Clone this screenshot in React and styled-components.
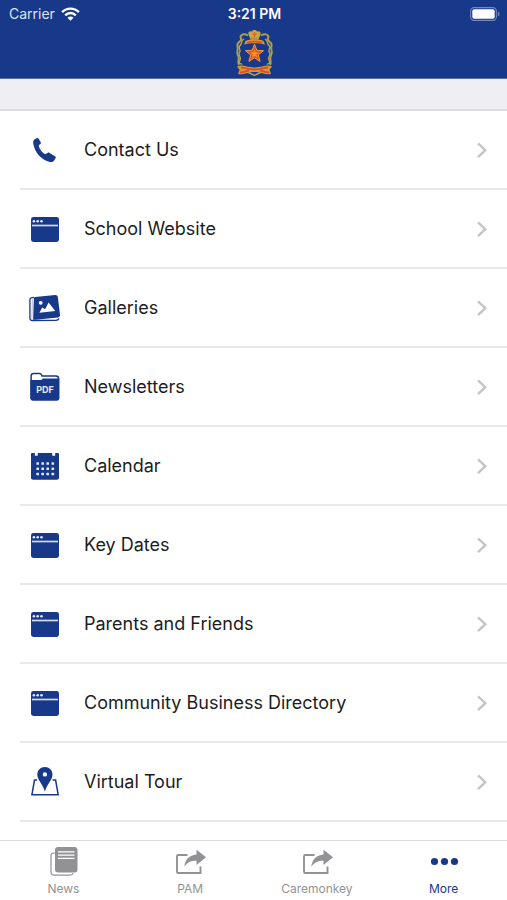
import React from "react";
import styled, { createGlobalStyle } from "styled-components";

const BLUE = "#18388a";
const GREY = "#929295";

const GlobalStyle = createGlobalStyle`
  * { box-sizing: border-box; }
  body {
    margin: 0;
    background: #fff;
    color: #1c1c1e;
    font-family: Inter, "Liberation Sans", sans-serif;
  }
`;

const Screen = styled.div`
  min-height: 100vh;
  display: flex;
  flex-direction: column;
`;

const Header = styled.header`
  height: 79px;
  display: flex;
  flex-direction: column;
  align-items: center;
  background: ${BLUE};
  border-bottom: 1px solid #5a70ad;
  color: #fff;
`;

const StatusBar = styled.div`
  width: 100%;
  height: 28px;
  padding: 0 7px 0 9px;
  display: grid;
  grid-template-columns: 1fr auto 1fr;
  align-items: center;
  font-size: 14px;
  line-height: 20px;
`;

const Carrier = styled.span`
  display: flex;
  align-items: center;
  gap: 6px;
  color: #dfe5f3;
`;

const Clock = styled.time`
  font-weight: 600;
`;

const Battery = styled.span`
  display: flex;
  justify-content: flex-end;
`;

const SectionGap = styled.div`
  height: 32px;
  background: #efeef3;
  border-bottom: 2px solid #dddde0;
`;

const Menu = styled.ul`
  flex: 1;
  margin: 0;
  padding: 0 0 18px 20px;
  list-style: none;
`;

const MenuLink = styled.a`
  height: 79px;
  padding: 0 18px 0 9px;
  display: flex;
  align-items: center;
  border-bottom: 2px solid #e9e9eb;
  color: inherit;
  font-size: 18px;
  line-height: 24px;
  text-decoration: none;
`;

const MenuIcon = styled.span`
  width: 32px;
  height: 32px;
  margin-right: 23px;
  color: ${BLUE};
`;

const MenuLabel = styled.span`
  flex: 1;
`;

const Tabs = styled.nav`
  position: sticky;
  bottom: 0;
  height: 60px;
  display: grid;
  grid-template-columns: repeat(4, 1fr);
  background: #fff;
  border-top: 1px solid #dcdcde;
`;

const Tab = styled.button`
  padding: 4px 0 0;
  display: flex;
  flex-direction: column;
  align-items: center;
  gap: 4px;
  border: 0;
  background: none;
  color: ${({ $active }) => ($active ? BLUE : GREY)};
  font-family: inherit;
  font-size: 12px;
  line-height: 16px;
  cursor: pointer;
`;

const Svg = styled.svg`
  display: block;
  flex: none;
`;

const Wifi = () => (
  <Svg width="19" height="14" viewBox="0 0 19 14" fill="none" stroke="#fff" strokeWidth="2.4" aria-hidden="true">
    <path d="M1.1 5.1c4.7-4.7 12.1-4.7 16.8 0M4.2 8.3c3-3 7.6-3 10.6 0" />
    <path d="M9.5 13.7 6.5 10.7c1.7-1.6 4.3-1.6 6 0Z" fill="#fff" stroke="none" />
  </Svg>
);

const BatteryIcon = () => (
  <Svg width="30" height="14" viewBox="0 0 30 14" aria-label="Battery full" role="img">
    <rect x=".6" y=".6" width="25.8" height="12.8" rx="3.6" fill="none" stroke="#7688be" strokeWidth="1.1" />
    <rect x="2.3" y="2.3" width="22.4" height="9.4" rx="2" fill="#fff" />
    <path d="M28 4.6c2 .8 2 4 0 4.8Z" fill="#7688be" />
  </Svg>
);

const Crest = () => (
  <Svg width="40" height="48" viewBox="0 0 40 48" fill="none" aria-label="School crest" role="img">
    <path d="M16.5 11.500 14.500 6.500c-.8-2.600 1.700-3.900 3.500-2.700.3-2.900 4.700-2.900 5 0 1.800-1.200 4.300.1 3.500 2.700l-2 5Z" fill="#c9a93a" />
    <path d="M20.500 4v5M18.500 6.300h4" stroke="#e65a2e" strokeWidth="1.300" />
    <path d="M16.500 10.300h8" stroke="#8f8a55" strokeWidth="1" />
    <path d="M11.500 13c4-2.200 14-2.200 18 0l1.500 3.600c-5-1.700-16-1.700-21 0Z" fill="#dd9a34" />
    <path d="M12.500 14.700c4-1.500 12-1.500 16 0" stroke="#e2502c" strokeWidth="1.700" />
    <path d="M14 7.500C9 4.500 5.500 7.500 7 10.500S2 14 3.500 18s-2 5.500.500 9.500-1.500 6 1 9.500" stroke="#aaa04a" strokeWidth="2" />
    <path d="M27 7.500c5-3 8.500 0 7 3s5 3.500 3.500 7.500 2 5.500-.5 9.500 1.500 6-1 9.500" stroke="#aaa04a" strokeWidth="2" />
    <path d="M10 11c-4 2-1 4-4 6.500s2 4-.5 7 3 4 .5 8 2 3 2 4" stroke="#bfa93f" strokeWidth="1.300" />
    <path d="M31 11c4 2 1 4 4 6.500s-2 4 .5 7-3 4-.5 8-2 3-2 4" stroke="#bfa93f" strokeWidth="1.300" />
    <path d="m20.500 16.200 2.300 6.100 6.700.4-5.200 4.200 1.800 6.500-5.600-3.600-5.600 3.600 1.800-6.500-5.200-4.200 6.700-.4Z" fill="#ee4a22" stroke="#eba33a" />
    <path d="m20.500 21 1 3.300 3.500-.1-2.700 2.200 1.100 3.400-2.900-2-2.900 2 1.100-3.400-2.700-2.200 3.500.1Z" fill="#f7912b" />
    <path d="M3 38.500c5-2.500 9 1 17.500 1s12.500-3.500 17.500-1l-2.500 3.200 1.500 4.300c-5.500 1.500-9-2-16.500-2S9.500 47.500 4 46l1.500-4.300Z" fill="#cf9a35" />
    <path d="M7 39.700c5-.2 6 1.800 13.500 1.800S29 39.500 34 39.700M6 44.500c4 .3 6-1.800 9-2m11 0c3 .2 5 2.300 9 2" stroke="#df4c2b" strokeWidth="1.800" />
    <path d="m14.500 44.500 6 2.800 6-2.800" stroke="#c7a33c" strokeWidth="1.400" />
  </Svg>
);

const PhoneIcon = () => (
  <Svg width="32" height="32" viewBox="0 0 32 32" fill="currentColor" aria-hidden="true">
    <path d="M5.300 5.600 7.700 4.200c.8-.5 1.500-.3 2 .5l2 3.500c.4.800.3 1.400-.4 1.900l-1.200 1c-.4.500-.4 1-.2 1.600 1.100 2.900 3 5.400 5.500 7.100.6.400 1.200.400 1.800 0l1.300-.9c.8-.5 1.400-.5 2.100 0l5.400 3.400c.8.500 1 1.200.5 2l-1.200 1.900c-.9 1.400-2.600 2.200-4.400 1.800C12.400 26 5.200 18.300 4.200 9.100c-.1-1.500.2-2.700 1.100-3.500Z" />
  </Svg>
);

const WindowIcon = () => (
  <Svg width="32" height="32" viewBox="0 0 32 32" aria-hidden="true">
    <rect x="2" y="4" width="28" height="25" rx="2.4" fill="currentColor" />
    <path d="M3 12.5h26" stroke="#d4dcef" strokeWidth="1.7" />
    <g fill="#e4e9f5">
      <circle cx="4.900" cy="8.200" r="1.300" />
      <circle cx="8.700" cy="8.200" r="1.300" />
      <circle cx="12.500" cy="8.200" r="1.300" />
    </g>
  </Svg>
);

const GalleryIcon = () => (
  <Svg width="32" height="32" viewBox="0 0 32 32" aria-hidden="true">
    <path d="M5 5.300 2.300 5.800A2 2 0 0 0 .9 8v18c0 1.600.8 2.500 2.300 2.500L27 28.300c1.400 0 2.600-.8 3-1.800" fill="none" stroke="currentColor" strokeWidth="1.300" />
    <path d="m6.200 5 19.900-2.100c1.400-.1 2.500.6 2.700 1.800L31 22.800c.2 1.500-.7 2.400-2.100 2.600L6.700 27.800H4.100L4.900 6.500c0-.9.4-1.400 1.300-1.500Z" fill="currentColor" />
    <path d="m2.900 6.700 1.300-.2-.8 20.400c-.8 0-1.100-.4-1.100-1.200Z" fill="#c3cce3" />
    <circle cx="11.700" cy="10.800" r="1.900" fill="#fff" />
    <path d="m10.400 20.700 2.800-5.200 2.900 1.700 3.500-6.700 6.700 8.500Z" fill="#fff" />
  </Svg>
);

const PdfText = styled.text`
  font-size: 9px;
  font-weight: 700;
  fill: #e5eaf5;
`;

const PdfIcon = () => (
  <Svg width="32" height="32" viewBox="0 0 32 32" aria-hidden="true">
    <path d="M2.100 28V5.200c0-1.800.8-2.700 2.500-2.700h6c1 0 1.600.5 1.900 1.300l.5 1.100h14c1.700 0 2.500.9 2.500 2.500V28" fill="#fff" stroke="currentColor" strokeWidth="1.500" />
    <path d="M1.400 9.100h10.800l1.700-1.500h16.400v19.500c0 1.700-.9 2.600-2.600 2.600H4c-1.700 0-2.600-.9-2.600-2.600Z" fill="currentColor" />
    <PdfText x="16" y="22" textAnchor="middle">PDF</PdfText>
  </Svg>
);

const CalendarIcon = () => (
  <Svg width="32" height="32" viewBox="0 0 32 32" aria-hidden="true">
    <path d="M2 4.300c0-.9.4-1.400 1.300-1.400h2.500v2c0 1.200 3 1.200 3 0v-2h14.400v2c0 1.200 3 1.200 3 0v-2h2.500c.9 0 1.300.5 1.300 1.400v23.300c0 1.400-.8 2.200-2.200 2.200H4.200c-1.400 0-2.200-.8-2.200-2.200Z" fill="currentColor" />
    {[13.5, 18.7, 24].map((y) =>
      [8.7, 13.7, 18.7, 23.8].map((x) => (
        <rect key={`${x}-${y}`} x={x - 1.3} y={y - 1.3} width="2.600" height="2.600" rx=".6" fill="#e5eaf5" />
      ))
    )}
  </Svg>
);

const MapIcon = () => (
  <Svg width="32" height="32" viewBox="0 0 32 32" aria-hidden="true">
    <path d="M8.200 14H5.500L2.900 28.800h26.300L26.600 14h-3" fill="none" stroke="currentColor" strokeWidth="1.500" />
    <path fillRule="evenodd" d="M15.900 1c-4.400 0-7.600 3.200-7.600 7.500 0 5.400 5.500 9.700 7.600 17 2.100-7.300 7.600-11.600 7.600-17C23.500 4.200 20.300 1 15.900 1Zm0 5.200a2.200 2.200 0 1 1 0 4.400 2.200 2.200 0 0 1 0-4.400Z" fill="currentColor" />
  </Svg>
);

const Chevron = () => (
  <Svg width="14" height="18" viewBox="0 0 14 18" fill="none" stroke="#c5c5c8" strokeWidth="2.400" aria-hidden="true">
    <path d="m3 2.300 7.300 6.900L3 16.100" />
  </Svg>
);

const NewsIcon = () => (
  <Svg width="32" height="32" viewBox="0 0 32 32" fill="none" aria-hidden="true">
    <path d="M8 8H6.500C4.800 8 4 9 4 10.500V27c0 2 1.200 3.200 3.200 3.200h16c1.700 0 2.600-.7 2.900-2" stroke="currentColor" strokeWidth="1.200" />
    <rect x="8" y="2" width="22.500" height="25.500" rx="3" fill="currentColor" />
    <path d="M11 6.800h16.500M11 10.100h16.500M11 13.400h16.500" stroke="#fff" strokeWidth="1.200" />
  </Svg>
);

const ShareIcon = () => (
  <Svg width="32" height="32" viewBox="0 0 32 32" aria-hidden="true">
    <path d="M13.500 10H4.300c-1 0-1.300.4-1.300 1.300v15.400c0 .9.400 1.300 1.300 1.300h22.200v-6.500" fill="none" stroke="currentColor" strokeWidth="1.900" />
    <path d="M22.500 4.800 32 12.300l-9.500 7.800v-4.300c-5.300-.2-8.700 1.200-12.300 6 1.200-7.700 5-11.600 12.300-12.400Z" fill="currentColor" />
  </Svg>
);

const MoreIcon = () => (
  <Svg width="32" height="32" viewBox="0 0 32 32" fill="currentColor" aria-hidden="true">
    <circle cx="6.500" cy="16.500" r="3.600" />
    <circle cx="16.500" cy="16.500" r="3.600" />
    <circle cx="26.500" cy="16.500" r="3.600" />
  </Svg>
);

const MENU = [
  ["Contact Us", PhoneIcon],
  ["School Website", WindowIcon],
  ["Galleries", GalleryIcon],
  ["Newsletters", PdfIcon],
  ["Calendar", CalendarIcon],
  ["Key Dates", WindowIcon],
  ["Parents and Friends", WindowIcon],
  ["Community Business Directory", WindowIcon],
  ["Virtual Tour", MapIcon],
];

const TABS = [
  ["News", NewsIcon],
  ["PAM", ShareIcon],
  ["Caremonkey", ShareIcon],
  ["More", MoreIcon],
];

export default function App() {
  return (
    <Screen>
      <GlobalStyle />
      <Header>
        <StatusBar>
          <Carrier>
            Carrier <Wifi />
          </Carrier>
          <Clock>3:21 PM</Clock>
          <Battery>
            <BatteryIcon />
          </Battery>
        </StatusBar>
        <Crest />
      </Header>
      <SectionGap />
      <Menu>
        {MENU.map(([label, Icon]) => (
          <li key={label}>
            <MenuLink href="#">
              <MenuIcon>
                <Icon />
              </MenuIcon>
              <MenuLabel>{label}</MenuLabel>
              <Chevron />
            </MenuLink>
          </li>
        ))}
      </Menu>
      <Tabs aria-label="Main">
        {TABS.map(([label, Icon]) => (
          <Tab key={label} type="button" $active={label === "More"} aria-current={label === "More" ? "page" : undefined}>
            <Icon />
            {label}
          </Tab>
        ))}
      </Tabs>
    </Screen>
  );
}
